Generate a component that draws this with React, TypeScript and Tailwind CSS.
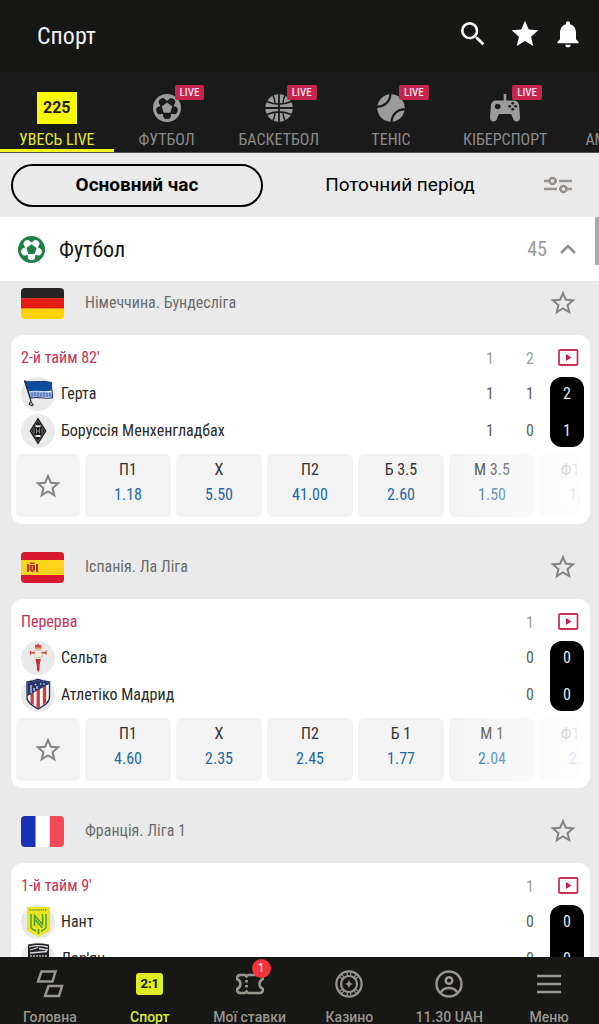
import React from "react";
import { MdSearch, MdStar, MdNotifications, MdStarBorder } from "react-icons/md";

const condensed = "font-['Roboto_Condensed','Roboto',sans-serif]";

function SoccerBall({ size, color, gap }: { size: number; color: string; gap: string }) {
  return (
    <svg width={size} height={size} viewBox="0 0 28 28" aria-hidden="true">
      <circle cx="14" cy="14" r="14" fill={color} />
      <circle cx="14" cy="14" r="7.4" fill={gap} />
      {[36, 108, 180, 252, 324].map((a) => (
        <circle key={a} cx="14" cy="6.8" r="3.9" fill={gap} transform={`rotate(${a} 14 14)`} />
      ))}
      <path d="M14 8.6l5.300 3.900-2 6.200h-6.600l-2-6.200z" fill={color} />
    </svg>
  );
}

function Basketball() {
  return (
    <svg width="28" height="28" viewBox="0 0 28 28" aria-hidden="true">
      <circle cx="14" cy="14" r="13.7" fill="#9b9b9b" />
      <g fill="none" stroke="#1a1a1a" strokeWidth="1.8">
        <path d="M14 0v28M0 14h28M1 7.200c8 3.600 18 3.600 26 0M1 20.800c8-3.600 18-3.600 26 0" />
        <path d="M7.500 0.500c1.600 2.500 2.300 5 2.500 8.500M20.500 0.500c-1.600 2.500-2.300 5-2.500 8.500M7.500 27.500c1.600-2.500 2.300-5 2.500-8.500M20.500 27.500c-1.600-2.500-2.300-5-2.500-8.500" strokeWidth="1.400" />
      </g>
    </svg>
  );
}

function TennisBall() {
  return (
    <svg width="28" height="28" viewBox="0 0 28 28" aria-hidden="true">
      <circle cx="14" cy="14" r="13.7" fill="#9b9b9b" />
      <path d="M0 12.500C7 13 13 8 13.500 0M28 15.500c-7-.5-13 4.500-13.500 12.500" fill="none" stroke="#1a1a1a" strokeWidth="2.200" />
    </svg>
  );
}

function Gamepad() {
  return (
    <svg width="30" height="28" viewBox="0 0 30 28" aria-hidden="true">
      <path d="M13.700 0h2.600v6.500h7.200c3 0 5.400 2 5.600 4.800l.9 11.700c.2 2.800-1.200 4.600-3.300 4.600-1.700 0-2.800-1-3.500-2.700L21.200 20H8.800l-2 4.900C6.100 26.600 5 27.600 3.300 27.600c-2.100 0-3.500-1.800-3.300-4.600l.9-11.700C1.100 8.500 3.500 6.500 6.500 6.500h7.200z" fill="#9b9b9b" />
      <g fill="#1a1a1a">
        <circle cx="7.700" cy="12.500" r="2.800" />
        <circle cx="22.700" cy="9.300" r="1.400" />
        <circle cx="22.700" cy="15.300" r="1.400" />
        <circle cx="19.700" cy="12.300" r="1.400" />
        <circle cx="25.700" cy="12.300" r="1.400" />
      </g>
    </svg>
  );
}

function Tab({ label, icon, live }: { label: string; icon: React.ReactNode; live?: boolean }) {
  return (
    <button
      type="button"
      className={
        live
          ? "flex min-w-[106px] shrink-0 flex-col items-center border-b-3 border-transparent px-[19px] text-[#8b8b8b]"
          : "flex min-w-[106px] shrink-0 flex-col items-center border-b-3 border-[#f4f71c] px-[19px] text-[#e6ea27]"
      }
    >
      <span className="relative mt-5 flex h-8 items-center">
        {icon}
        {live && (
          <span className="absolute -top-[7px] left-[22px] rounded-[2px] bg-[#c4264f] px-[5px] text-[11px] leading-[15px] font-medium text-[#f3dbe2]">
            LIVE
          </span>
        )}
      </span>
      <span className="mt-[7px] text-base leading-[18px] whitespace-nowrap">{label}</span>
    </button>
  );
}

function Germany() {
  return (
    <svg viewBox="0 0 43 31" className="h-[31px] w-[43px] rounded" aria-hidden="true">
      <path fill="#262424" d="M0 0h43v10.500H0z" />
      <path fill="#e51a12" d="M0 10.300h43v10.500H0z" />
      <path fill="#fdd301" d="M0 20.600h43V31H0z" />
    </svg>
  );
}
function Spain() {
  return (
    <svg viewBox="0 0 43 31" className="h-[31px] w-[43px] rounded" aria-hidden="true">
      <path fill="#d8182e" d="M0 0h43v31H0z" />
      <path fill="#fed21b" d="M0 8h43v15H0z" />
      <path fill="#b03a2a" d="M6 12h2v8H6zM15 12h2v8h-2zM8.500 13h5.500v5l-2.700 2.500L8.500 18zM9 10.500h4.500V12H9z" />
      <path fill="#e2a32a" d="M10.800 14h1v4h-1z" />
    </svg>
  );
}
function France() {
  return (
    <svg viewBox="0 0 43 31" className="h-[31px] w-[43px] rounded" aria-hidden="true">
      <path fill="#fff" d="M0 0h43v31H0z" />
      <path fill="#1832b5" d="M0 0h14.500v31H0z" />
      <path fill="#f44a58" d="M28.700 0H43v31H28.700z" />
    </svg>
  );
}

function Hertha() {
  return (
    <svg width="34" height="34" viewBox="0 0 34 34" aria-hidden="true">
      <path d="M3.500 4C11 6 20 3 30.500 5.500c-1 5 1.500 9 1 15.500-8 1-15-1.500-21.500 0z" fill="#fff" stroke="#15284f" strokeWidth="1" />
      <path d="M4 4.300C11 6 20 3 30.300 5.600c-.5 3 .2 5.500.6 8-8 1.500-16-.8-23.500 1z" fill="#0d4da1" />
      <path d="M8 15c7-1.500 15 .7 23 0l.2 5c-8 1-15-1-21.500.3z" fill="#8fa9da" />
      <path d="M11 15.500v4M14 15.300v3.800M17 15.500v4M20 16v3.500M23 15.800v4M26 16v4M29 16v4" stroke="#3561b4" strokeWidth=".9" />
      <path d="M3.500 3.500L10 24M9.500 24l3 4.500M9 25l-.5 2.500 3 1.500" fill="none" stroke="#2b3038" strokeWidth="1.300" />
    </svg>
  );
}
function Gladbach() {
  return (
    <svg width="34" height="34" viewBox="0 0 34 34" aria-hidden="true">
      <path d="M17 3.500L25.500 17 17 30.500 8.500 17z" fill="#171717" />
      <path d="M17 6.500L23.700 17 17 27.500 10.300 17z" fill="none" stroke="#9a9a9a" strokeWidth=".5" />
      <path d="M14.500 11.300h5v2h-5zM14.500 21h5v2h-5z" fill="#e4e4e4" />
      <path d="M13 14.500v5M15.500 14.500v5M18.500 14.500v5M21 14.500v5M15.500 17h3" stroke="#8f8f8f" strokeWidth="1" />
    </svg>
  );
}
function Celta() {
  return (
    <svg width="34" height="34" viewBox="0 0 34 34" aria-hidden="true">
      <path d="M12 9.500h10.500l-1.500 7h-7.500z" fill="#f4ead2" stroke="#c9b999" strokeWidth=".5" />
      <path d="M14 3.500l1.500.8L17.200 2.500l1.700 1.800 1.500-.8v4h-6.400z" fill="#d8453e" />
      <path d="M14 6.500h6.400v2H14z" fill="#d9a35b" />
      <path d="M9 9l1.500 2H14v1.400h-3.500L9 14.500zM25.500 9L24 11h-3.500v1.400H24l1.500 2.100z" fill="#d33f48" />
      <path d="M14.500 18h5.300l-1.300 7 .1 3.500-1.400 2.500-1.400-2.500.1-3.500z" fill="#cc2940" />
    </svg>
  );
}
function Atletico() {
  return (
    <svg width="34" height="34" viewBox="0 0 34 34" aria-hidden="true">
      <path d="M6 4C10 3.500 13 3 17 1.500 21 3 24 3.500 28.500 4v15c0 6-6 9-11.300 12C12 28 6 25 6 19z" fill="#fff" stroke="#27315f" strokeWidth="1.400" />
      <path d="M9.500 14h3.300v13.300L9.500 25zM15.500 11h3.400v18.500l-1.700 1-1.700-1zM21.800 8h3.400v16.500l-3.400 2.800z" fill="#d03a41" />
      <path d="M6.500 4.500C11 4 13 3.500 17 2c4 1.500 6 2 11 2.500V6L6.500 18z" fill="#24386e" />
      <path d="M10 7v8M13 10v3M16 8v3M14 6l1 1M19 5.500l1 1M22.500 5.500l1 1" stroke="#dde3f2" strokeWidth="1.200" />
    </svg>
  );
}
function Nantes() {
  return (
    <svg width="34" height="34" viewBox="0 0 34 34" aria-hidden="true">
      <path d="M6 2h23v22c0 3-7 4.500-11.500 8C13 28.500 6 27 6 24z" fill="#e9e51f" />
      <path d="M8.500 5H26" stroke="#7a9a2c" strokeWidth="1.500" strokeDasharray="1.500 .7" />
      <path d="M10 9v13.500c1 2 3.500 3 5 3.500M25 9v13.500c-1 2-3.500 3-5 3.500M13.500 21V10.500l8 9V9M13.500 14l8 9" fill="none" stroke="#45a135" strokeWidth="1.500" />
      <path d="M17.500 24v5" stroke="#45a135" strokeWidth="1.800" />
    </svg>
  );
}
function Lorient() {
  return (
    <svg width="34" height="34" viewBox="0 0 34 34" aria-hidden="true">
      <path d="M7 2.500C13 1 22 1 28 2.500V24L17.500 32 7 24z" fill="#202125" />
      <path d="M8 5c6-2 13-1.500 19 0M9 8l8-2.500M18 6.500l9 1.500M9 11l17-1.500" fill="none" stroke="#dcdcdc" strokeWidth="1.300" />
      <path d="M9 14h17" stroke="#8f8f8f" strokeWidth="2" strokeDasharray="2 1" />
    </svg>
  );
}

function StreamIcon() {
  return (
    <svg width="21" height="17" viewBox="0 0 21 17" aria-hidden="true">
      <rect x="1" y="1" width="18.500" height="15" rx="1" fill="none" stroke="#c73358" strokeWidth="1.800" />
      <path d="M8 5l5.500 3.500L8 12z" fill="#c02050" />
    </svg>
  );
}

type Match = {
  league: string;
  flag: React.ReactNode;
  status: string;
  teams: { name: string; crest: React.ReactNode }[];
  periods: [string, string, string][];
  total: [string, string];
  odds: [string, string][];
};

const matches: Match[] = [
  {
    league: "Німеччина. Бундесліга",
    flag: <Germany />,
    status: "2-й тайм 82'",
    teams: [
      { name: "Герта", crest: <Hertha /> },
      { name: "Боруссія Менхенгладбах", crest: <Gladbach /> },
    ],
    periods: [["1", "1", "1"], ["2", "1", "0"]],
    total: ["2", "1"],
    odds: [["П1", "1.18"], ["Х", "5.50"], ["П2", "41.00"], ["Б 3.5", "2.60"], ["М 3.5", "1.50"], ["Ф1 (-1)", "1.90"]],
  },
  {
    league: "Іспанія. Ла Ліга",
    flag: <Spain />,
    status: "Перерва",
    teams: [
      { name: "Сельта", crest: <Celta /> },
      { name: "Атлетіко Мадрид", crest: <Atletico /> },
    ],
    periods: [["1", "0", "0"]],
    total: ["0", "0"],
    odds: [["П1", "4.60"], ["Х", "2.35"], ["П2", "2.45"], ["Б 1", "1.77"], ["М 1", "2.04"], ["Ф1 (-1)", "2.90"]],
  },
  {
    league: "Франція. Ліга 1",
    flag: <France />,
    status: "1-й тайм 9'",
    teams: [
      { name: "Нант", crest: <Nantes /> },
      { name: "Лор'ян", crest: <Lorient /> },
    ],
    periods: [["1", "0", "0"]],
    total: ["0", "0"],
    odds: [],
  },
];

function MatchBlock({ match }: { match: Match }) {
  return (
    <section className="mb-[11px]">
      <div className="flex h-16 items-center px-[21px]">
        {match.flag}
        <h3 className="ml-[21px] flex-1 text-base text-[#6d6d6d]">{match.league}</h3>
        <button type="button" aria-label="До обраного" className="text-[#858585]">
          <MdStarBorder size={30} />
        </button>
      </div>
      <article className="mr-[9px] ml-[11px] overflow-hidden rounded-xl bg-white pt-[11px] pb-[7px]">
        <div className="flex pr-[6px] pl-[10px]">
          <div className="flex-1">
            <p className="mb-[7px] h-6 text-base text-[#c9305a]">{match.status}</p>
            <div className="flex flex-col gap-[3px]">
              {match.teams.map((t) => (
                <div key={t.name} className="flex h-[34px] items-center gap-[6px]">
                  <span className="size-[34px] rounded-full bg-[#eaeaea]">{t.crest}</span>
                  <span className="text-base text-[#2a2a2a]">{t.name}</span>
                </div>
              ))}
            </div>
          </div>
          {match.periods.map((p, i) => (
            <div key={i} className="w-10 text-center text-base text-[#5c5c5c]">
              <p className="mb-[7px] h-6 pt-px text-[#a0a0a0]">{p[0]}</p>
              <p className="mb-[3px] h-[34px] leading-[34px]">{p[1]}</p>
              <p className="h-[34px] leading-[34px]">{p[2]}</p>
            </div>
          ))}
          <div className="w-[34px]">
            <button type="button" aria-label="Трансляція" className="mb-[7px] flex h-6 w-full items-center justify-center pb-px pl-[3px]">
              <StreamIcon />
            </button>
            <div className="h-[70px] rounded-xl bg-black text-center text-base text-[#e6e6e6]">
              <p className="mb-[3px] h-[34px] leading-[34px]">{match.total[0]}</p>
              <p className="h-[34px] leading-[34px]">{match.total[1]}</p>
            </div>
          </div>
        </div>
        {match.odds.length > 0 && (
          <div className="relative mt-[6px] mr-[10px] ml-[5px] flex gap-[5px] overflow-hidden">
            <button type="button" aria-label="Стежити за матчем" className="flex h-[63px] w-16 shrink-0 items-center justify-center rounded-md bg-[#f3f3f3] text-[#858585]">
              <MdStarBorder size={30} />
            </button>
            {match.odds.map(([name, value]) => (
              <button key={name} type="button" className="h-[63px] w-[86px] shrink-0 rounded-md bg-[#f3f3f3] pb-[7px] text-base">
                <span className="block leading-[25px] text-[#333]">{name}</span>
                <span className="block leading-[25px] text-[#2069a4]">{value}</span>
              </button>
            ))}
            <span className="pointer-events-none absolute inset-y-0 right-0 w-[130px] bg-linear-to-r from-white/0 to-white/90" />
          </div>
        )}
      </article>
    </section>
  );
}

const navIcon = { width: 28, height: 28, viewBox: "0 0 28 28", fill: "none", stroke: "#99958f", strokeWidth: 2.5, "aria-hidden": true };

const nav = [
  {
    label: "Головна",
    icon: (
      <svg {...navIcon}>
        <path d="M5.500 1.500h14l-3 10H2zM12.500 16H26l-3 10H9z" />
      </svg>
    ),
  },
  { label: "Спорт", icon: <span className="rounded-[3px] bg-[#dcee24] px-1 text-[13px] leading-[22px] font-bold text-[#171815]">2:1</span> },
  {
    label: "Мої ставки",
    badge: "1",
    icon: (
      <svg {...navIcon}>
        <path d="M4 5h5l1.500 1.500L12 5h12c2 0 3 1 3 4-2.500 1-3.500 3-3.500 5s1 4 3.500 5c0 3-1 4-3 4H12l-1.500-1.500L9 23H4c-2 0-3-1-3-4 2.500-1 3.500-3 3.500-5S3.500 10 1 9c0-3 1-4 3-4z" />
        <path d="M10.500 10v9" strokeWidth="2.800" strokeDasharray="2.500 2.500" />
      </svg>
    ),
  },
  {
    label: "Казино",
    icon: (
      <svg {...navIcon} strokeWidth={2.2}>
        <circle cx="14" cy="14" r="12.600" />
        <circle cx="14" cy="14" r="8" />
        <path d="M12.300 1.500v5M15.700 1.500v5M12.300 21.500v5M15.700 21.500v5M4 6.200l4 3M6 4l3.500 3.500M24 6.200l-4 3M22 4l-3.500 3.500M4 21.800l4-3M6 24l3.500-3.500M24 21.800l-4-3M22 24l-3.500-3.500" strokeWidth="1.200" />
        <path d="M14 9.500c.6 3 1.500 3.900 4.500 4.500-3 .6-3.900 1.500-4.500 4.500-.6-3-1.500-3.900-4.500-4.500 3-.6 3.900-1.500 4.500-4.500z" fill="#99958f" stroke="none" />
      </svg>
    ),
  },
  {
    label: "11.30 UAH",
    icon: (
      <svg {...navIcon}>
        <circle cx="14" cy="14" r="12.500" />
        <circle cx="14" cy="10.500" r="3.300" />
        <path d="M5.500 23c1.500-3.500 5-5 8.500-5s7 1.500 8.500 5" />
      </svg>
    ),
  },
  {
    label: "Меню",
    icon: (
      <svg {...navIcon}>
        <path d="M2 6h24M2 14h24M2 22h24" />
      </svg>
    ),
  },
];

export default function App() {
  return (
    <div className={`${condensed} flex h-dvh flex-col overflow-hidden bg-[#eaeaea] antialiased`}>
      <header className="flex h-[72px] shrink-0 items-center bg-[#171715] pr-[15px] pl-[37px] text-white">
        <h1 className="flex-1 text-2xl text-[#f0f0f0]">Спорт</h1>
        <div className="flex items-center pb-1">
          <button type="button" aria-label="Пошук" className="mr-5"><MdSearch size={32} /></button>
          <button type="button" aria-label="Обране" className="mr-[11px]"><MdStar size={32} /></button>
          <button type="button" aria-label="Сповіщення"><MdNotifications size={32} /></button>
        </div>
      </header>

      <nav className="flex h-[81px] shrink-0 overflow-hidden border-b border-[#555] bg-[#1a1a1a]" aria-label="Види спорту">
        <Tab label="УВЕСЬ LIVE" icon={<span className="bg-[#f8fb08] px-[6px] font-['Roboto',sans-serif] text-base leading-8 font-bold text-[#1c1c10]">225</span>} />
        <Tab live label="ФУТБОЛ" icon={<SoccerBall size={28} color="#9b9b9b" gap="#1a1a1a" />} />
        <Tab live label="БАСКЕТБОЛ" icon={<Basketball />} />
        <Tab live label="ТЕНІС" icon={<TennisBall />} />
        <Tab live label="КІБЕРСПОРТ" icon={<Gamepad />} />
        <Tab live label="АМ. ФУТБОЛ" icon={<SoccerBall size={28} color="#9b9b9b" gap="#1a1a1a" />} />
      </nav>

      <div className="flex h-16 shrink-0 items-center gap-[18px] pr-[27px] pl-[11px] font-['Roboto',sans-serif] text-[19px] text-black">
        <div className="grid flex-1 grid-cols-2 gap-[11px]">
          <button type="button" className="h-[43px] rounded-full border-2 border-black font-bold">Основний час</button>
          <button type="button" className="h-[43px]">Поточний період</button>
        </div>
        <button type="button" aria-label="Фільтри">
          <svg width="28" height="18" viewBox="0 0 28 18" fill="none" stroke="#96918c" strokeWidth="2.400" aria-hidden="true">
            <path d="M0 5h5M11 5h2M15 5h13M0 13h13M15 13h2M23 13h5" />
            <circle cx="8.500" cy="5" r="3" />
            <circle cx="19.500" cy="13" r="3" />
          </svg>
        </button>
      </div>

      <main className="relative min-h-0 flex-1 overflow-hidden">
        <div className="relative z-10 flex h-16 items-center bg-white pr-[22px] pl-[18px]">
          <SoccerBall size={27} color="#1d7f4a" gap="#ffffff" />
          <h2 className="ml-[14px] flex-1 text-[22px] text-[#161616]">Футбол</h2>
          <span className="mr-3 text-xl text-[#9a9a9a]">45</span>
          <button type="button" aria-label="Згорнути">
            <svg width="18" height="12" viewBox="0 0 18 12" fill="none" stroke="#8f8f8f" strokeWidth="2.500" aria-hidden="true">
              <path d="M2 10l7-7 7 7" />
            </svg>
          </button>
          <span className="absolute top-0 right-0 h-12 w-1 bg-[#a9a9a9]" />
        </div>
        <div className="-mt-[10px]">
          {matches.map((m) => (
            <MatchBlock key={m.league} match={m} />
          ))}
        </div>
      </main>

      <nav className="grid h-[67px] shrink-0 grid-cols-6 bg-[#171715] font-['Roboto',sans-serif]" aria-label="Головне меню">
        {nav.map((n) => (
          <a
            key={n.label}
            href="#"
            className={
              n.label === "Спорт"
                ? "flex flex-col items-center pt-[13px] text-[#d8ea2c]"
                : "flex flex-col items-center pt-[13px] text-[#99958f]"
            }
          >
            <span className="relative flex h-7 items-center">
              {n.icon}
              {n.badge && (
                <span className="absolute -top-[11px] left-4 size-[19px] rounded-full bg-[#f5333b] text-center text-xs leading-[19px] text-white">
                  {n.badge}
                </span>
              )}
            </span>
            <span className="mt-[11px] text-sm leading-4 font-medium whitespace-nowrap">{n.label}</span>
          </a>
        ))}
      </nav>
    </div>
  );
}
